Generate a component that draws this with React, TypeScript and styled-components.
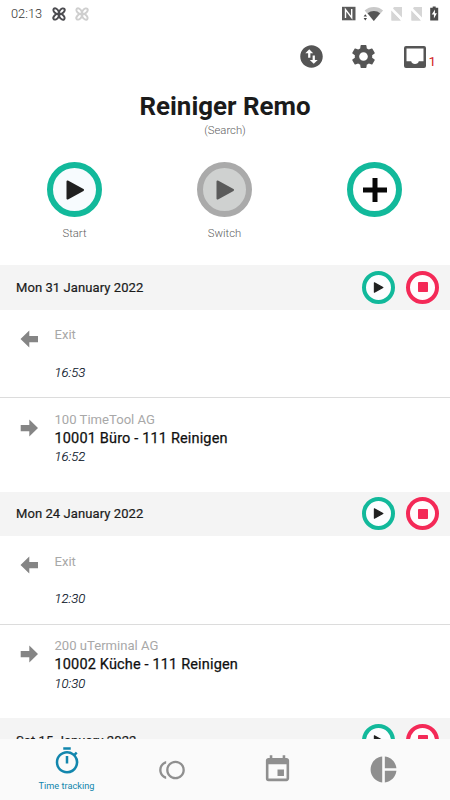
import React from "react";
import styled, { createGlobalStyle } from "styled-components";
import { MdSettings, MdOutlineTimer, MdToll, MdEvent, MdPieChart, MdSwapVerticalCircle } from "react-icons/md";

const GlobalStyle = createGlobalStyle`
  * { box-sizing: border-box; }
  body { margin: 0; background: #fff; font-family: Roboto, "Liberation Sans", sans-serif; overflow: hidden; }
  svg { display: block; }
`;

const Screen = styled.div`
  width: 450px;
  height: 800px;
  display: flex;
  flex-direction: column;
  overflow: hidden;
  background: #fff;
`;

const StatusBar = styled.header`
  flex: none;
  height: 27px;
  padding: 0 10px 0 11px;
  display: flex;
  align-items: center;
  justify-content: space-between;
`;

const StatusGroup = styled.div<{ $gap: number }>`
  display: flex;
  align-items: center;
  gap: ${(p) => p.$gap}px;
`;

const Clock = styled.span`
  font-size: 12.8px;
  line-height: 26px;
  font-weight: 300;
  color: #333;
  margin-right: 2px;
`;

const Toolbar = styled.div`
  flex: none;
  height: 59px;
  padding: 0 14px 0 298px;
  display: grid;
  grid-template-columns: 27px 29px 35px;
  column-gap: 24px;
  align-items: center;
  color: #555;
`;

const Inbox = styled.div`
  display: flex;
  align-items: center;
  padding-left: 2px;
`;

const Count = styled.span`
  color: #d21f26;
  font-size: 13.5px;
  line-height: 16px;
  margin: 9px 0 0 2.5px;
`;

const Heading = styled.div`
  flex: none;
  height: 76px;
  text-align: center;
`;

const Title = styled.h1`
  margin: 0;
  padding-top: 3px;
  font-size: 25.9px;
  line-height: 34px;
  font-weight: 700;
  color: #1b1b1b;
`;

const Hint = styled.div`
  padding-top: 1px;
  font-size: 11.3px;
  line-height: 14px;
  font-weight: 300;
  color: #606060;
`;

const Actions = styled.div`
  flex: none;
  height: 103px;
  margin-left: -0.5px;
  display: grid;
  grid-template-columns: repeat(3, 150px);
`;

const Action = styled.div`
  display: flex;
  flex-direction: column;
  align-items: center;
  gap: 10px;
  font-size: 11.3px;
  line-height: 13px;
  font-weight: 300;
  color: #606060;
`;

const Ring = styled.div<{ $size: number; $width: number; $color: string; $fill: string }>`
  flex: none;
  width: ${(p) => p.$size}px;
  height: ${(p) => p.$size}px;
  border: ${(p) => p.$width}px solid ${(p) => p.$color};
  border-radius: 50%;
  background: ${(p) => p.$fill};
  display: flex;
  align-items: center;
  justify-content: center;
`;

const List = styled.main`
  flex: 1;
  min-height: 0;
  overflow: hidden;
`;

const DayHeader = styled.div`
  height: 44.6px;
  padding: 0 11px 0 16px;
  display: flex;
  align-items: center;
  justify-content: space-between;
  background: #f4f4f4;
`;

const DayName = styled.span`
  font-size: 13px;
  font-weight: 400;
  letter-spacing: 0.08px;
  -webkit-text-stroke: 0.2px #1b1b1b;
  color: #1b1b1b;
`;

const DayButtons = styled.div`
  display: flex;
  gap: 11px;
`;

const Entry = styled.div<{ $last?: boolean }>`
  height: ${(p) => (p.$last ? 93.6 : 88.4)}px;
  padding: ${(p) => (p.$last ? 12.6 : 16.8)}px 16px 0 20px;
  border-bottom: ${(p) => (p.$last ? "none" : "1px solid #dcdcdc")};
  display: grid;
  grid-template-columns: 34.5px 1fr;
`;

const ArrowSlot = styled.div<{ $last?: boolean }>`
  padding-top: ${(p) => (p.$last ? 8.1 : 3.5)}px;
`;

const Details = styled.div`
  display: flex;
  flex-direction: column;
`;

const Company = styled.div`
  font-size: 13.1px;
  line-height: 18px;
  color: #a8a8a8;
`;

const Task = styled.div`
  height: 19.5px;
  font-size: 14.5px;
  line-height: 20px;
  font-weight: 400;
  letter-spacing: 0.16px;
  -webkit-text-stroke: 0.25px #101010;
  color: #101010;
`;

const Time = styled.div`
  font-size: 13px;
  line-height: 18px;
  font-weight: 300;
  font-style: italic;
  -webkit-text-stroke: 0.15px #08131f;
  color: #08131f;
`;

const TabBar = styled.nav`
  flex: none;
  height: 61px;
  display: grid;
  grid-template-columns: 133px 78px 132px 80px;
  background: #fafafa;
  color: #8f8f8f;
`;

const Tab = styled.div<{ $active?: boolean }>`
  display: flex;
  flex-direction: column;
  align-items: center;
  justify-content: ${(p) => (p.$active ? "flex-start" : "center")};
  padding-top: ${(p) => (p.$active ? 7 : 0)}px;
  color: ${(p) => (p.$active ? "#1286ad" : "#8f8f8f")};
  font-size: 9.2px;
  line-height: 14px;
  gap: 3px;
`;

const GREEN = "#12b99b";
const RED = "#f42957";

const Clover = ({ color }: { color: string }) => (
  <svg width="16" height="16" viewBox="0 0 15 15" fill="none" stroke={color} strokeWidth="1.8">
    {[45, 135, 225, 315].map((a) => (
      <ellipse key={a} cx="7.5" cy="3.6" rx="1.9" ry="3" transform={`rotate(${a} 7.5 7.5)`} />
    ))}
  </svg>
);

const StatusIcons = () => (
  <svg width="100" height="17" viewBox="0 0 100 17">
    <rect x="2" y="1.8" width="13.5" height="13.5" fill="#5a5a5a" />
    <path d="M5.5 13V4.6l6.2 8V4.1" fill="none" stroke="#fff" strokeWidth="1.4" />
    <path d="M24.6 5.4a14.5 14.5 0 0 1 18.5 0L33.8 16z" fill="#c9c9c9" />
    <path d="M27.6 8.2a10.5 10.5 0 0 1 12.6 0L33.8 16z" fill="#555" />
    <path d="m23.6 11.6 1.7-2.4 1.7 2.4zM23.6 13h3.4l-1.7 2.4z" fill="#444" />
    {[50, 70].map((x) => (
      <g key={x} fill="#d6d6d6">
        <path d={`M${x + 4} 2h8v10.5L${x + 3} 3.5z`} />
        <path d={`M${x + 1.5} 5.5V15.5h9z`} />
        <path d={`M${x + 1.5} 5.5V15.5H${x + 11}z`} />
        <path d={`m${x - 0.5} 2.5 13 13`} stroke="#fff" strokeWidth="1.5" />
      </g>
    ))}
    <path d="M92.7 1.5h3v1.3h2.5V15.5h-8V2.8h2.5z" fill="#4b4b4b" />
    <path d="m95 4.5-3.3 5h2.2v4l3-5.2h-2z" fill="#fff" />
  </svg>
);

const Tray = () => (
  <svg width="22" height="22" viewBox="0 0 22 22">
    <path
      fillRule="evenodd"
      fill="#555"
      d="M2 0h18a2 2 0 0 1 2 2v18a2 2 0 0 1-2 2H2a2 2 0 0 1-2-2V2a2 2 0 0 1 2-2zM2.5 2.5V15.3H7.2a3.9 3.5 0 0 0 7.6 0h4.7V2.5z"
    />
  </svg>
);

const Play = ({ size, color }: { size: number; color: string }) => (
  <svg width={size} height={size} viewBox="0 0 20 20">
    <path d="M2.5 1.5 18 10 2.5 18.5z" fill={color} stroke={color} strokeWidth="2" strokeLinejoin="round" />
  </svg>
);

const Plus = () => (
  <svg width="24" height="24" viewBox="0 0 24 24">
    <path d="M9.5 0h5v9.5H24v5h-9.5V24h-5v-9.5H0v-5h9.5z" fill="#080808" />
  </svg>
);

const Stop = () => (
  <svg width="10" height="10" viewBox="0 0 10 10">
    <rect width="10" height="10" rx="0.8" fill={RED} />
  </svg>
);

const Arrow = ({ back }: { back?: boolean }) => (
  <svg width="18" height="18" viewBox="0 0 18 18" fill="#858585">
    <path d={back ? "M.5 9 9.3.4v5.5H18v6.3H9.3v5.4z" : "M18 9 9.3.4v5.5H.7v6.3h8.6v5.4z"} />
  </svg>
);

type DayProps = { date: string; exit?: string; company?: string; task?: string; entered?: string };

const Day = ({ date, exit, company, task, entered }: DayProps) => (
  <section>
    <DayHeader>
      <DayName>{date}</DayName>
      <DayButtons>
        <Ring $size={33} $width={4} $color={GREEN} $fill="#fcfdff">
          <Play size={11} color="#202020" />
        </Ring>
        <Ring $size={33} $width={4} $color={RED} $fill="#fffcfd">
          <Stop />
        </Ring>
      </DayButtons>
    </DayHeader>
    {exit && (
      <>
        <Entry>
          <ArrowSlot>
            <Arrow back />
          </ArrowSlot>
          <Details>
            <Company>Exit</Company>
            <Task />
            <Time>{exit}</Time>
          </Details>
        </Entry>
        <Entry $last>
          <ArrowSlot $last>
            <Arrow />
          </ArrowSlot>
          <Details>
            <Company>{company}</Company>
            <Task>{task}</Task>
            <Time>{entered}</Time>
          </Details>
        </Entry>
      </>
    )}
  </section>
);

export default function App() {
  return (
    <Screen>
      <GlobalStyle />
      <StatusBar>
        <StatusGroup $gap={7}>
          <Clock>02:13</Clock>
          <Clover color="#4c4c50" />
          <Clover color="#cfcfcf" />
        </StatusGroup>
        <StatusIcons />
      </StatusBar>
      <Toolbar>
        <MdSwapVerticalCircle size={27} />
        <MdSettings size={29} />
        <Inbox>
          <Tray />
          <Count>1</Count>
        </Inbox>
      </Toolbar>
      <Heading>
        <Title>Reiniger Remo</Title>
        <Hint>(Search)</Hint>
      </Heading>
      <Actions>
        <Action>
          <Ring $size={55} $width={6} $color={GREEN} $fill="#f7fbfe">
            <Play size={20} color="#202020" />
          </Ring>
          Start
        </Action>
        <Action>
          <Ring $size={55} $width={6} $color="#aaaaaa" $fill="#cfd1d0">
            <Play size={20} color="#5b5b5b" />
          </Ring>
          Switch
        </Action>
        <Action>
          <Ring $size={55} $width={6} $color={GREEN} $fill="#fff">
            <Plus />
          </Ring>
        </Action>
      </Actions>
      <List>
        <Day date="Mon 31 January 2022" exit="16:53" company="100 TimeTool AG" task="10001 Büro - 111 Reinigen" entered="16:52" />
        <Day date="Mon 24 January 2022" exit="12:30" company="200 uTerminal AG" task="10002 Küche - 111 Reinigen" entered="10:30" />
        <Day date="Sat 15 January 2022" />
      </List>
      <TabBar>
        <Tab $active>
          <MdOutlineTimer size={30} />
          Time tracking
        </Tab>
        <Tab>
          <MdToll size={28} />
        </Tab>
        <Tab>
          <MdEvent size={31} />
        </Tab>
        <Tab>
          <MdPieChart size={31} />
        </Tab>
      </TabBar>
    </Screen>
  );
}
